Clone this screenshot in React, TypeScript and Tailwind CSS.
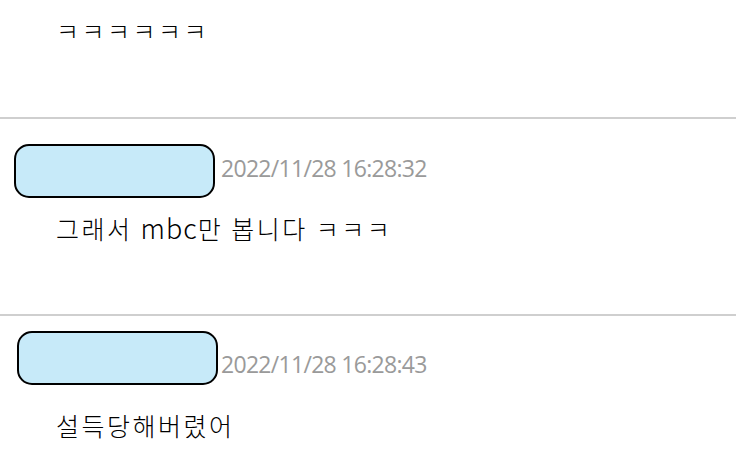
import React from "react";

const kr = { fontFamily: '"Noto Sans CJK KR", "Noto Sans", sans-serif' };
const dateFont = { fontFamily: '"Open Sans", "Noto Sans", sans-serif' };

export default function App() {
  return (
    <div className="w-[736px] h-[474px] overflow-hidden bg-white flex flex-col">
      <div className="h-[117px] pt-[13px] pl-[56px]">
        <p style={kr} className="text-[25px] font-light leading-[34px] tracking-[2.5px] text-black">ㅋㅋㅋㅋㅋㅋ</p>
      </div>
      <div className="h-[2px] bg-[#cfcfcf]" />
      <div className="h-[195px] flex flex-col">
        <div className="flex items-start mt-[25px] ml-[14px]">
          <div className="w-[201px] h-[54px] rounded-[15px] border-2 border-black bg-[#c7eaf9]" />
          <span style={dateFont} className="ml-[6px] mt-[9px] text-[23px] leading-[30px] tracking-[-0.7px] text-[#9a9a9a]">
            2022/11/28 16:28:32
          </span>
        </div>
        <p style={kr} className="mt-[13px] pl-[56px] text-[25px] font-light leading-[34px] tracking-[2.5px] text-black">
          그래서 <span className="text-[27px] tracking-[1px]">mbc</span>만 봅니다 ㅋㅋㅋ
        </p>
      </div>
      <div className="h-[2px] bg-[#cfcfcf]" />
      <div className="flex flex-col">
        <div className="flex items-start mt-[15px] ml-[17px]">
          <div className="w-[201px] h-[54px] rounded-[15px] border-2 border-black bg-[#c7eaf9]" />
          <span style={dateFont} className="ml-[3px] mt-[18px] text-[23px] leading-[30px] tracking-[-0.7px] text-[#9a9a9a]">
            2022/11/28 16:28:43
          </span>
        </div>
        <p style={kr} className="mt-[23px] pl-[56px] text-[25px] font-light leading-[34px] tracking-[2.5px] text-black">
          설득당해버렸어
        </p>
      </div>
    </div>
  );
}
